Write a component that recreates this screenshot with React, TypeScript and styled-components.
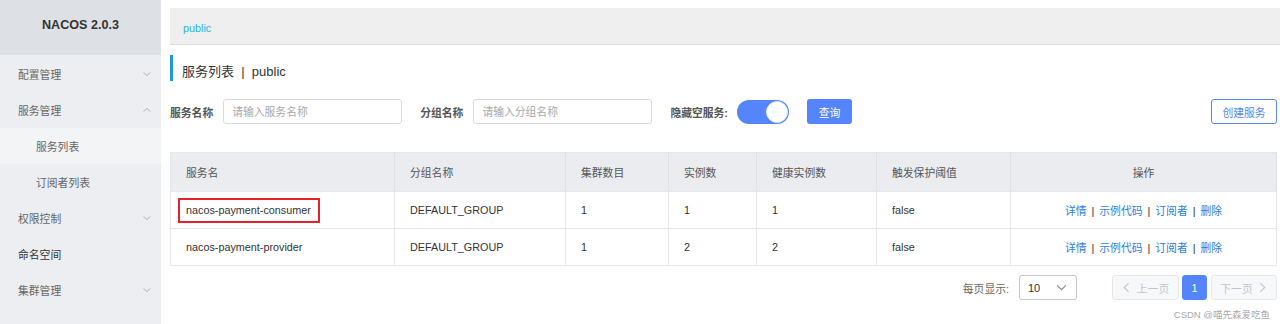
import * as React from 'react'
import styled, { createGlobalStyle } from 'styled-components'

const GlobalStyle = createGlobalStyle`
	html, body {
		margin: 0;
		padding: 0;
		background: #fff;
	}
	body {
		font-family: 'Liberation Sans', 'Noto Sans CJK SC', sans-serif;
		font-size: 10.8px;
		color: #333;
		overflow: hidden;
	}
	* {
		box-sizing: border-box;
	}
`

const BLUE = '#5584ff'
const LINK = '#2e7de1'

interface MenuItem {
	title: string
	sub?: boolean
	active?: boolean
	strong?: boolean
	arrow?: 'up' | 'down'
}

const menu: MenuItem[] = [
	{ title: '配置管理', arrow: 'down' },
	{ title: '服务管理', arrow: 'up' },
	{ title: '服务列表', sub: true, active: true },
	{ title: '订阅者列表', sub: true },
	{ title: '权限控制', arrow: 'down' },
	{ title: '命名空间', strong: true },
	{ title: '集群管理', arrow: 'down' },
]

interface Service {
	name: string
	group: string
	clusters: number
	instances: number
	healthy: number
	threshold: string
	marked?: boolean
}

const services: Service[] = [
	{ name: 'nacos-payment-consumer', group: 'DEFAULT_GROUP', clusters: 1, instances: 1, healthy: 1, threshold: 'false', marked: true },
	{ name: 'nacos-payment-provider', group: 'DEFAULT_GROUP', clusters: 1, instances: 2, healthy: 2, threshold: 'false' },
]

const columns = [
	{ title: '服务名', width: 224 },
	{ title: '分组名称', width: 171 },
	{ title: '集群数目', width: 103 },
	{ title: '实例数', width: 88 },
	{ title: '健康实例数', width: 120 },
	{ title: '触发保护阈值', width: 134 },
	{ title: '操作', width: 266, center: true },
]

const Chevron = ({ dir, size = 8, color = '#999' }: { dir: 'up' | 'down' | 'left' | 'right'; size?: number; color?: string }) => {
	const points = {
		down: '1,3 5,7 9,3',
		up: '1,7 5,3 9,7',
		left: '6,1 2,5 6,9',
		right: '3,1 7,5 3,9',
	}[dir]
	return (
		<svg width={size} height={size} viewBox="0 0 10 10" fill="none">
			<polyline points={points} stroke={color} strokeWidth="1" strokeLinejoin="miter" />
		</svg>
	)
}

export default function App() {
	return (
		<Layout>
			<GlobalStyle />
			<SideBar>
				<Brand>NACOS 2.0.3</Brand>
				{menu.map(item => (
					<MenuRow key={item.title} $sub={item.sub} $active={item.active} $strong={item.strong}>
						<span>{item.title}</span>
						{item.arrow && <Chevron dir={item.arrow} />}
					</MenuRow>
				))}
			</SideBar>
			<Main>
				<Breadcrumb>public</Breadcrumb>
				<PageTitle>服务列表&nbsp;&nbsp;|&nbsp;&nbsp;public</PageTitle>
				<Filters>
					<Label>服务名称</Label>
					<Input placeholder="请输入服务名称" />
					<Label $gap={18}>分组名称</Label>
					<Input placeholder="请输入分组名称" />
					<Label $gap={18}>隐藏空服务:</Label>
					<Switch>
						<Knob />
					</Switch>
					<PrimaryButton>查询</PrimaryButton>
					<OutlineButton>创建服务</OutlineButton>
				</Filters>
				<Table>
					<colgroup>
						{columns.map(c => (
							<col key={c.title} style={{ width: c.width }} />
						))}
					</colgroup>
					<thead>
						<tr>
							{columns.map(c => (
								<Th key={c.title} $center={c.center}>
									{c.title}
								</Th>
							))}
						</tr>
					</thead>
					<tbody>
						{services.map(s => (
							<tr key={s.name}>
								<Td>{s.marked ? <Marked>{s.name}</Marked> : s.name}</Td>
								<Td>{s.group}</Td>
								<Td>{s.clusters}</Td>
								<Td>{s.instances}</Td>
								<Td>{s.healthy}</Td>
								<Td>{s.threshold}</Td>
								<Td $center>
									<Link>详情</Link>
									<Sep>|</Sep>
									<Link>示例代码</Link>
									<Sep>|</Sep>
									<Link>订阅者</Link>
									<Sep>|</Sep>
									<Link>删除</Link>
								</Td>
							</tr>
						))}
					</tbody>
				</Table>
				<Pager>
					<PagerLabel>每页显示:</PagerLabel>
					<PageSize>
						<span>10</span>
						<Chevron dir="down" size={11} color="#888" />
					</PageSize>
					<PageButton $disabled $width={67} $gap={35}>
						<Chevron dir="left" size={11} color="#c4c6cf" />
						上一页
					</PageButton>
					<PageButton $current $width={25} $gap={3}>
						1
					</PageButton>
					<PageButton $disabled $width={66} $gap={4}>
						下一页
						<Chevron dir="right" size={11} color="#c4c6cf" />
					</PageButton>
				</Pager>
				<Watermark>CSDN @喵先森爱吃鱼</Watermark>
			</Main>
		</Layout>
	)
}

const Layout = styled.div`
	display: flex;
	width: 1280px;
	height: 324px;
	overflow: hidden;
`

const SideBar = styled.div`
	flex: 0 0 161px;
	background: #eceef1;
	display: flex;
	flex-direction: column;
`

const Brand = styled.div`
	height: 55px;
	padding-bottom: 6px;
	margin-bottom: 1px;
	display: flex;
	align-items: center;
	justify-content: center;
	background: #dde0e4;
	font-size: 12.6px;
	font-weight: bold;
	color: #333;
`

const MenuRow = styled.div<{ $sub?: boolean; $active?: boolean; $strong?: boolean }>`
	height: 36px;
	display: flex;
	align-items: center;
	justify-content: space-between;
	padding: 0 10px 0 ${p => (p.$sub ? 36 : 18)}px;
	background: ${p => (p.$active ? '#f3f4f6' : 'transparent')};
	color: ${p => (p.$strong ? '#333' : '#666')};
	font-size: 10.8px;
`

const Main = styled.div`
	flex: 1;
	padding: 8px 3px 0 9px;
	display: flex;
	flex-direction: column;
	min-width: 0;
`

const Breadcrumb = styled.div`
	height: 37px;
	margin-right: -3px;
	padding: 3px 0 0 13px;
	display: flex;
	align-items: center;
	background: #efefef;
	border-bottom: 1px solid #dcdcdc;
	color: #1fb5e2;
	font-size: 10.8px;
`

const PageTitle = styled.div`
	margin-top: 10px;
	height: 26px;
	display: flex;
	align-items: center;
	padding: 4px 0 0 9px;
	border-left: 3px solid #1b9ad6;
	font-size: 13px;
	color: #333;
`

const Filters = styled.div`
	margin-top: 18px;
	height: 25px;
	display: flex;
	align-items: center;
`

const Label = styled.span<{ $gap?: number }>`
	margin-left: ${p => p.$gap || 0}px;
	margin-right: 10px;
	font-weight: bold;
	color: #555;
	font-size: 10.8px;
`

const Input = styled.input`
	width: 179px;
	height: 25px;
	border: 1px solid #d9dbe0;
	border-radius: 3px;
	padding: 0 8px;
	font-family: inherit;
	font-size: 10.8px;
	outline: none;

	&::placeholder {
		color: #a8a8a8;
	}
`

const Switch = styled.div`
	width: 52px;
	height: 24px;
	margin-left: -1px;
	border-radius: 12px;
	background: ${BLUE};
	display: flex;
	align-items: center;
	justify-content: flex-end;
	padding-right: 1px;
`

const Knob = styled.div`
	width: 22px;
	height: 22px;
	border-radius: 50%;
	background: #fff;
	border: 1px solid #e5ebff;
`

const PrimaryButton = styled.div`
	margin-left: 18px;
	width: 45px;
	height: 25px;
	border-radius: 3px;
	background: ${BLUE};
	color: #fff;
	display: flex;
	align-items: center;
	justify-content: center;
	font-size: 10.8px;
`

const OutlineButton = styled.div`
	margin-left: auto;
	width: 66px;
	height: 25px;
	border-radius: 3px;
	border: 1px solid ${BLUE};
	color: ${BLUE};
	background: #fff;
	display: flex;
	align-items: center;
	justify-content: center;
	font-size: 10.8px;
`

const Table = styled.table`
	margin-top: 28px;
	width: 1106px;
	border-collapse: collapse;
	table-layout: fixed;
	border: 1px solid #e6e7eb;
	font-size: 10.8px;
`

const Th = styled.th<{ $center?: boolean }>`
	height: 39px;
	padding: 0 0 0 ${p => (p.$center ? 0 : 15)}px;
	text-align: ${p => (p.$center ? 'center' : 'left')};
	font-weight: normal;
	color: #555;
	background: #ebecf0;
	border-right: 1px solid #e0e1e5;
	border-bottom: 1px solid #e6e7eb;
`

const Td = styled.td<{ $center?: boolean }>`
	height: 37px;
	padding: 0 0 0 ${p => (p.$center ? 0 : 15)}px;
	text-align: ${p => (p.$center ? 'center' : 'left')};
	color: #333;
	border-right: 1px solid #e6e7eb;
	border-bottom: 1px solid #e6e7eb;
	white-space: nowrap;
`

const Marked = styled.span`
	display: inline-block;
	margin-left: -8px;
	padding: 4px 7px 5px 6px;
	border: 2px solid #e8202a;
`

const Link = styled.a`
	color: ${LINK};
	cursor: pointer;
`

const Sep = styled.span`
	margin: 0 5px;
	color: #333;
`

const Pager = styled.div`
	margin-top: 9px;
	height: 25px;
	display: flex;
	align-items: center;
	justify-content: flex-end;
`

const PagerLabel = styled.span`
	color: #666;
	margin-right: 10px;
	font-size: 10.8px;
`

const PageSize = styled.div`
	width: 58px;
	height: 25px;
	border: 1px solid #c4c6cf;
	border-radius: 3px;
	display: flex;
	align-items: center;
	justify-content: space-between;
	padding: 0 9px 0 8px;
	font-size: 11px;
	color: #333;
`

const PageButton = styled.div<{ $disabled?: boolean; $current?: boolean; $width: number; $gap: number }>`
	width: ${p => p.$width}px;
	height: 25px;
	margin-left: ${p => p.$gap}px;
	border-radius: 3px;
	display: flex;
	align-items: center;
	justify-content: center;
	gap: 4px;
	font-size: 10.8px;
	border: 1px solid ${p => (p.$current ? BLUE : '#e6e7eb')};
	background: ${p => (p.$current ? BLUE : '#f7f8fa')};
	color: ${p => (p.$current ? '#fff' : '#c4c6cf')};
`

const Watermark = styled.div`
	margin-top: 7px;
	padding-right: 7px;
	text-align: right;
	font-size: 9.5px;
	color: #aaa;
`
